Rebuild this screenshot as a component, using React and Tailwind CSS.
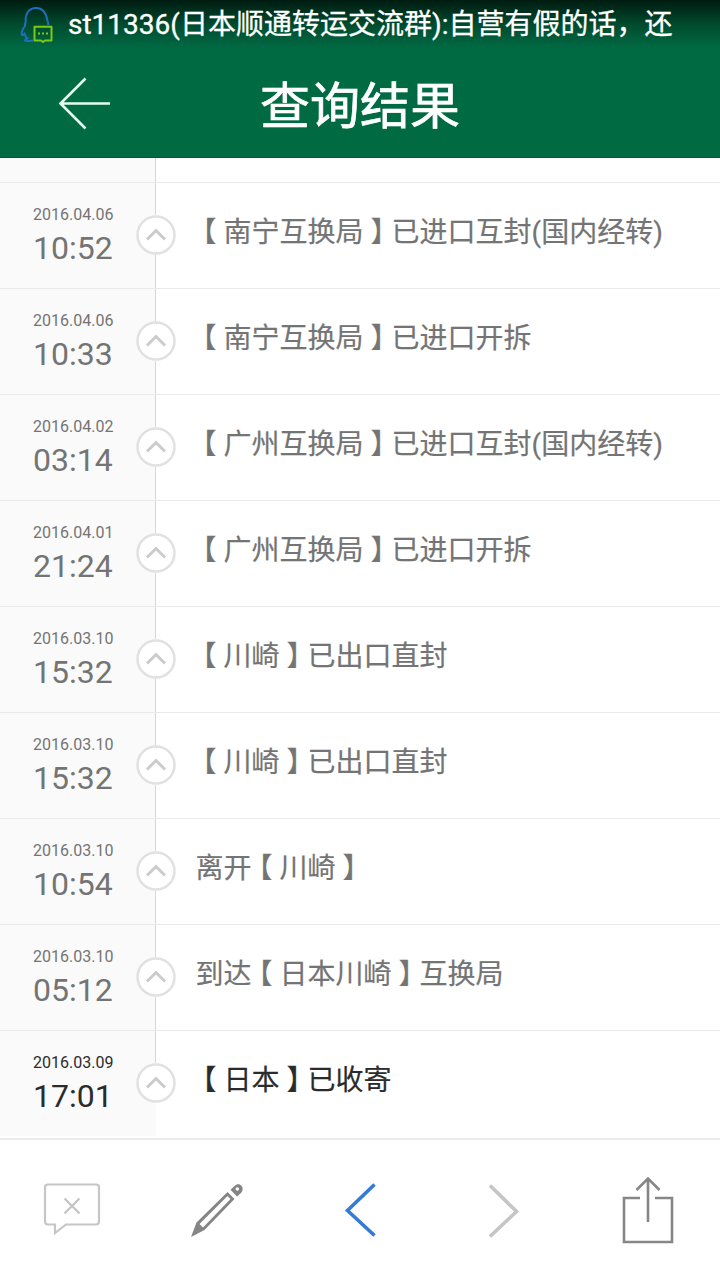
const records = [
  { date: '2016.04.06', time: '10:52', text: '【南宁互换局】已进口互封(国内经转)' },
  { date: '2016.04.06', time: '10:33', text: '【南宁互换局】已进口开拆' },
  { date: '2016.04.02', time: '03:14', text: '【广州互换局】已进口互封(国内经转)' },
  { date: '2016.04.01', time: '21:24', text: '【广州互换局】已进口开拆' },
  { date: '2016.03.10', time: '15:32', text: '【川崎】已出口直封' },
  { date: '2016.03.10', time: '15:32', text: '【川崎】已出口直封' },
  { date: '2016.03.10', time: '10:54', text: '离开【川崎】' },
  { date: '2016.03.10', time: '05:12', text: '到达【日本川崎】互换局' },
  { date: '2016.03.09', time: '17:01', text: '【日本】已收寄' },
];

function QQIcon() {
  return (
    <svg className="h-10 w-10 shrink-0" viewBox="0 0 40 40" fill="none">
      <path
        d="M15 36.500c-3 .5-7.500 1-8 0-.3-1 1.500-1.500 2.500-2.200-1.500-1-2.500-2.300-3-4.300-1 1.200-2.500 1.500-2.700.3-.5-2.500 1-5.500 3.200-8.300-.3-1.500-.2-2.500.7-4C7 10.500 10.500 4 18 4S28.500 10.500 29.500 17c.7 1 .8 2 .8 4"
        stroke="#1d70bd"
        strokeWidth="2"
      />
      <path
        d="M16.500 22.800h17v13.700h-6.500l-2 1.500-2-1.500h-6.500z"
        stroke="#7ec715"
        strokeWidth="2"
        strokeLinejoin="round"
      />
      <path d="M20 29.500h2M24 29.500h2M28 29.500h2" stroke="#7ec715" strokeWidth="2.200" />
    </svg>
  );
}

function Header() {
  return (
    <header className="flex h-[158px] flex-col border-b border-[#005a38] bg-[#006a43]">
      <div className="flex h-12 items-center bg-gradient-to-b from-[#001c11] via-[#004a2e] via-50% to-[#006a43] pl-[18px]">
        <QQIcon />
        <span className="ml-[10px] pt-0.5 text-[28px] leading-[46px] whitespace-nowrap text-white [-webkit-text-stroke:0.3px_white]">
          st11336(日本顺通转运交流群):自营有假的话，还
        </span>
      </div>
      <div className="grid flex-1 grid-cols-[160px_1fr_160px] items-center">
        <svg
          className="ml-[56px] h-14 w-14"
          viewBox="0 0 56 56"
          fill="none"
          stroke="#e3fff3"
          strokeWidth="2.600"
        >
          <path d="M29.500 3.500 4.500 28.500 29.500 53.500M4.500 28.500H54" />
        </svg>
        <h1 className="pt-[9px] text-center text-[50px] leading-[100px] text-white [-webkit-text-stroke:0.7px_white]">
          查询结果
        </h1>
      </div>
    </header>
  );
}

// Half-width bracket glyphs, centered in a full-width cell
function Description({ text }) {
  return text.split(/([【】])/).map((part, i) => {
    const isBracket = part === '【' || part === '】';
    return (
      <span key={i} className={isBracket ? "mx-[7px] [font-feature-settings:'halt']" : ''}>
        {part}
      </span>
    );
  });
}

function Node({ last }) {
  return (
    <div className="flex w-10 flex-col">
      <div className="ml-[19px] h-8 w-px bg-[#d6d6d6]" />
      <svg className="h-10 w-10 shrink-0" viewBox="0 0 40 40" fill="none">
        <circle cx="20" cy="20" r="18.500" fill="#fff" stroke="#e1e1e1" strokeWidth="2.500" />
        <path d="M11 24.500 20 15.500 29 24.500" stroke="#cbcbcb" strokeWidth="3" />
      </svg>
      {!last && <div className="ml-[19px] w-px flex-1 bg-[#d6d6d6]" />}
    </div>
  );
}

function Record({ record, last }) {
  return (
    <li
      className={`flex h-[106px] border-t border-[#e9e9e9] bg-[linear-gradient(to_right,#fafafa_156px,#ffffff_156px)] ${
        last ? 'text-[#2b2b2b]' : 'text-[#747474]'
      }`}
    >
      <div className="w-[136px] pt-[22px] pl-[33px]">
        <div className="text-base leading-5">{record.date}</div>
        <div className="text-[32px] leading-[46px]">{record.time}</div>
      </div>
      <Node last={last} />
      <p className="pt-[29px] pl-[19.5px] text-[28px] leading-[42px] whitespace-nowrap [-webkit-text-stroke:0.2px]">
        <Description text={record.text} />
      </p>
    </li>
  );
}

function Toolbar() {
  return (
    <nav className="grid flex-1 grid-cols-5 items-center border-t-2 border-[#ebebeb] bg-white">
      <svg className="h-20 w-20 justify-self-center" viewBox="32 1170 80 80" fill="none" stroke="#c6c6c6" strokeWidth="2.200">
        <path d="M48 1184.500H96a3 3 0 0 1 3 3V1221.500a3 3 0 0 1-3 3H66L55 1233V1224.500H48a3 3 0 0 1-3-3V1187.500a3 3 0 0 1 3-3z" />
        <path d="M64.500 1198.500 79.500 1213.500M79.500 1198.500 64.500 1213.500" strokeWidth="2.400" />
      </svg>
      <svg className="h-20 w-20 justify-self-center" viewBox="176 1170 80 80" fill="#858585">
        <path
          fillRule="evenodd"
          d="M227.500 1192 234.500 1199 204.500 1230 191 1237 196.500 1222.500zM227.500 1196 199.500 1224 203 1227.500 230.500 1199z"
        />
        <path
          fillRule="evenodd"
          d="M230.500 1189.800 234.500 1186C237 1183.500 240 1184 241.500 1185.800 243.300 1188 243 1191 241 1193L237 1196.500zM235.500 1189a1.800 1.800 0 1 0 3.600 0 1.800 1.800 0 1 0-3.600 0z"
        />
      </svg>
      <svg className="h-20 w-20 justify-self-center" viewBox="320 1170 80 80" fill="none" stroke="#347bd5" strokeWidth="3.600">
        <path d="M374.500 1184.500 347.500 1210.500 374.500 1235.500" />
      </svg>
      <svg className="h-20 w-20 justify-self-center" viewBox="464 1170 80 80" fill="none" stroke="#c5c5c5" strokeWidth="3.600">
        <path d="M490 1185.500 516.500 1211.500 490 1236.500" />
      </svg>
      <svg className="h-20 w-20 justify-self-center" viewBox="608 1170 80 80" fill="none" stroke="#868686" strokeWidth="2.600">
        <path d="M640 1198H624V1242H672V1198H655" />
        <path d="M648 1222V1179M636.500 1190 648 1178.500 659.500 1190" />
      </svg>
    </nav>
  );
}

export default function App() {
  return (
    <div className="flex h-[1280px] w-[720px] flex-col overflow-hidden bg-white font-[Roboto,'Noto_Sans_CJK_SC',sans-serif]">
      <Header />
      <div className="flex h-6 bg-[linear-gradient(to_right,#fafafa_156px,#ffffff_156px)] pl-[155px]">
        <div className="w-px bg-[#d6d6d6]" />
      </div>
      <ul className="h-[956px]">
        {records.map((record, i) => (
          <Record key={i} record={record} last={i === records.length - 1} />
        ))}
      </ul>
      <Toolbar />
    </div>
  );
}
